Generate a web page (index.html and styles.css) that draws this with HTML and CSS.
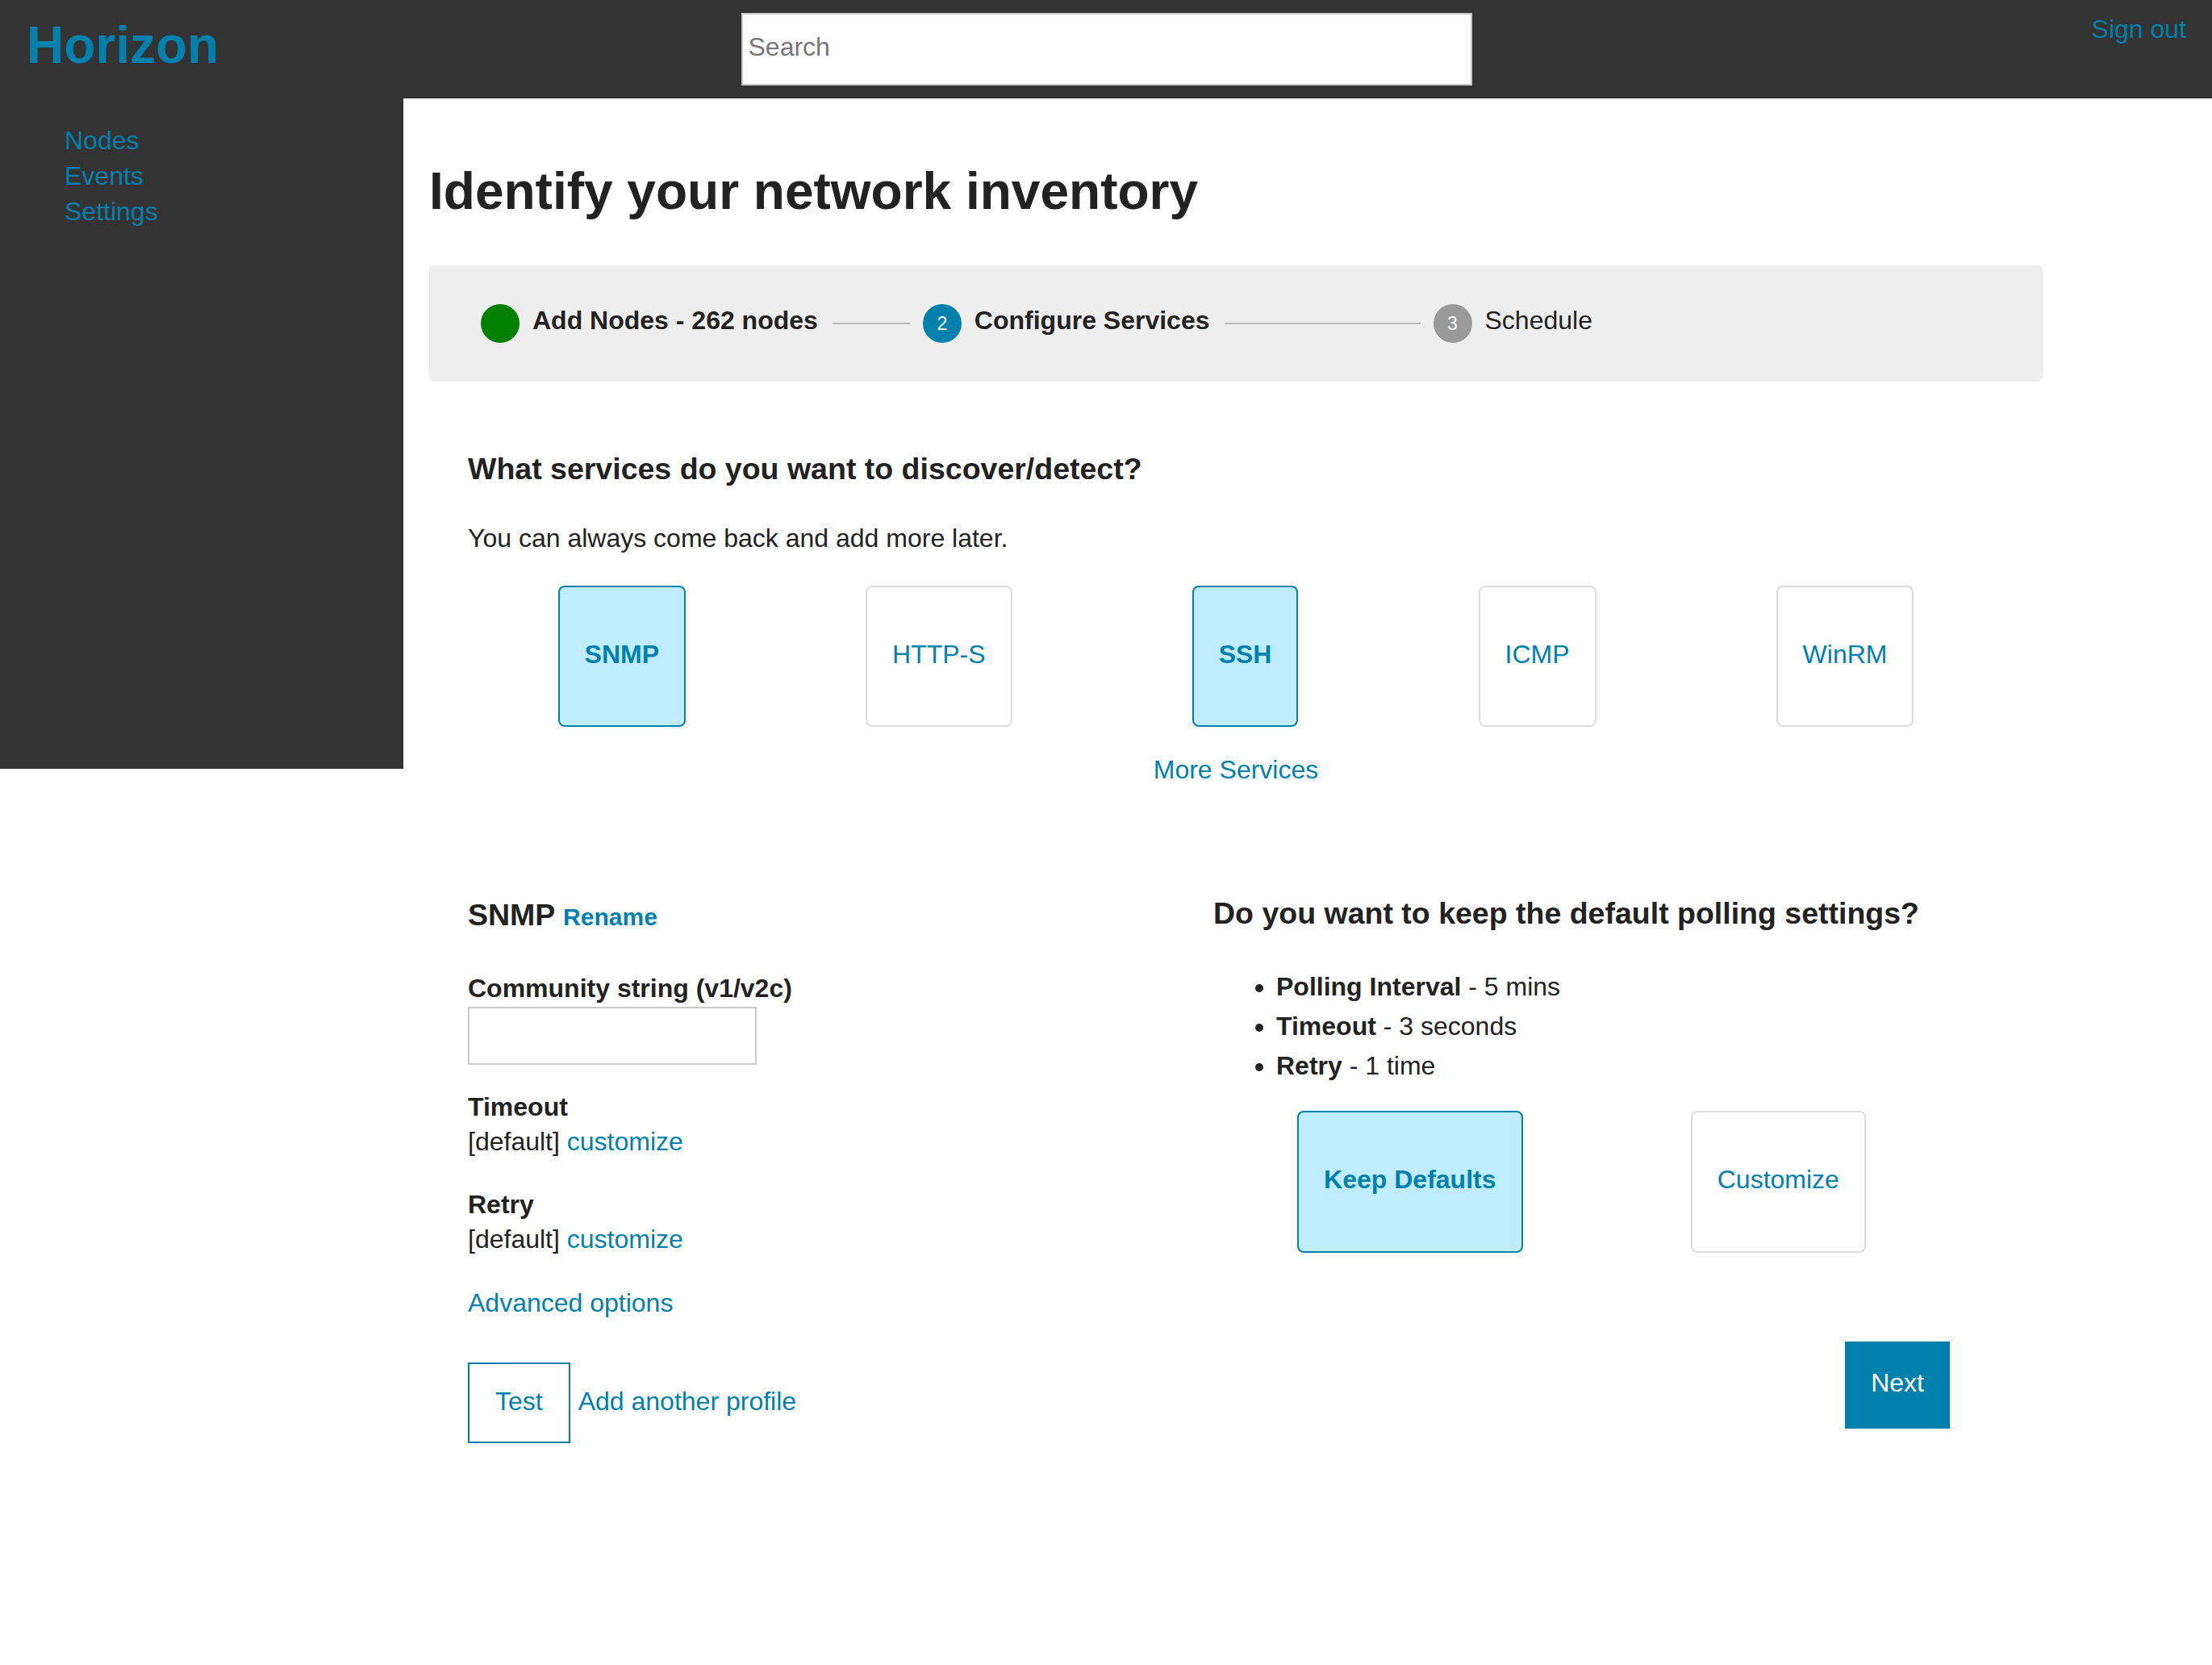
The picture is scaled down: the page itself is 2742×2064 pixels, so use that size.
FILE: index.html
```html
<!DOCTYPE html>
<html lang="en">
<head>
<meta charset="utf-8">
<title>Horizon - Identify your network inventory</title>
<link rel="stylesheet" href="styles.css">
</head>
<body>
<div class="app">
  <header class="topbar">
    <a class="logo" href="#">Horizon</a>
    <input class="search" type="text" placeholder="Search">
    <a class="signout" href="#">Sign out</a>
  </header>
  <div class="body-row">
    <nav class="sidebar">
      <a href="#">Nodes</a>
      <a href="#">Events</a>
      <a href="#">Settings</a>
    </nav>
    <main class="main">
      <h1 class="page-title">Identify your network inventory</h1>

      <div class="stepper">
        <div class="step">
          <span class="step-dot dot-done"></span>
          <span class="step-label strong">Add Nodes - 262 nodes</span>
        </div>
        <span class="step-line line-short"></span>
        <div class="step">
          <span class="step-dot dot-current">2</span>
          <span class="step-label strong">Configure Services</span>
        </div>
        <span class="step-line line-long"></span>
        <div class="step">
          <span class="step-dot dot-todo">3</span>
          <span class="step-label">Schedule</span>
        </div>
      </div>

      <section class="services">
        <h2 class="section-title">What services do you want to discover/detect?</h2>
        <p class="hint">You can always come back and add more later.</p>
        <div class="tiles">
          <button class="tile selected">SNMP</button>
          <button class="tile">HTTP-S</button>
          <button class="tile selected">SSH</button>
          <button class="tile">ICMP</button>
          <button class="tile">WinRM</button>
        </div>
        <div class="more"><a href="#">More Services</a></div>
      </section>

      <section class="config">
        <div class="profile">
          <h2 class="profile-title">SNMP <a class="rename" href="#">Rename</a></h2>
          <div class="field-label">Community string (v1/v2c)</div>
          <input class="text-input" type="text">
          <div class="setting-label">Timeout</div>
          <div class="setting-value">[default] <a href="#">customize</a></div>
          <div class="setting-label retry">Retry</div>
          <div class="setting-value">[default] <a href="#">customize</a></div>
          <div class="advanced"><a href="#">Advanced options</a></div>
          <div class="actions">
            <button class="btn-outline">Test</button>
            <a href="#">Add another profile</a>
          </div>
        </div>

        <div class="polling">
          <h2 class="polling-title">Do you want to keep the default polling settings?</h2>
          <ul class="polling-list">
            <li><b>Polling Interval</b> - 5 mins</li>
            <li><b>Timeout</b> - 3 seconds</li>
            <li><b>Retry</b> - 1 time</li>
          </ul>
          <div class="choices">
            <button class="tile choice selected">Keep Defaults</button>
            <button class="tile choice">Customize</button>
          </div>
          <div class="next-row">
            <button class="btn-primary">Next</button>
          </div>
        </div>
      </section>
    </main>
  </div>
</div>
</body>
</html>
```

FILE: styles.css
```css
* {
  box-sizing: border-box;
}

html,
body {
  margin: 0;
  padding: 0;
}

body {
  font-family: "Liberation Sans", Arial, Helvetica, sans-serif;
  font-size: 32px;
  line-height: 40px;
  color: #222;
  background: #fff;
}

a {
  color: #0081ad;
  text-decoration: none;
}

/* Header */
.topbar {
  display: grid;
  grid-template-columns: 1fr 906px 1fr;
  align-items: start;
  height: 122px;
  padding: 0 32px 0 33px;
  background: #333;
}

.logo {
  justify-self: start;
  margin-top: 19px;
  font-size: 64px;
  line-height: 74px;
  font-weight: 700;
}

.search {
  margin-top: 16px;
  width: 906px;
  height: 90px;
  padding: 0 7px 6px;
  border: 2px solid #c8c8c8;
  background: #fff;
  color: #222;
  font-family: inherit;
  font-size: 32px;
  outline: none;
}

.search::placeholder {
  color: #767676;
}

.signout {
  justify-self: end;
  margin-top: 16px;
}

/* Body */
.body-row {
  display: flex;
  align-items: flex-start;
}

.sidebar {
  flex: none;
  width: 500px;
  height: 831px;
  padding: 30px 0 0 80px;
  background: #333;
  display: flex;
  flex-direction: column;
  align-items: flex-start;
}

.sidebar a {
  line-height: 44px;
}

.main {
  flex: 1;
  padding: 78px 0 0 32px;
}

.page-title {
  margin: 0;
  font-size: 64px;
  line-height: 74px;
  font-weight: 700;
}

/* Stepper */
.stepper {
  margin-top: 55px;
  width: 2000px;
  height: 144px;
  padding-left: 64px;
  background: #eee;
  border-radius: 6px;
  display: flex;
  align-items: center;
}

.step {
  display: flex;
  align-items: center;
  gap: 16px;
}

.step-dot {
  width: 48px;
  height: 48px;
  border-radius: 50%;
  display: flex;
  align-items: center;
  justify-content: center;
  color: #fff;
  font-size: 23px;
  line-height: 1;
}

.dot-done {
  background: #008000;
}

.dot-current {
  background: #0081ad;
}

.dot-todo {
  background: #999;
}

.step-label {
  margin-bottom: 8px;
}

.strong {
  font-weight: 700;
}

.step-line {
  height: 2px;
  margin: 0 16px 0 18px;
  background: #bbb;
}

.line-short {
  width: 96px;
}

.line-long {
  width: 243px;
}

/* Services */
.services {
  width: 2000px;
  padding: 0 48px;
}

.section-title {
  margin: 86px 0 0;
  font-size: 37.5px;
  line-height: 44px;
  font-weight: 700;
}

.hint {
  margin: 44px 0 0;
}

.tiles {
  margin-top: 39px;
  display: flex;
  justify-content: space-around;
}

.tile {
  height: 175px;
  padding: 0 31px 6px;
  border: 2px solid #ddd;
  border-radius: 8px;
  background: #fff;
  color: #0081ad;
  font-family: inherit;
  font-size: 32px;
  line-height: 40px;
  font-weight: 400;
  display: flex;
  align-items: center;
  cursor: pointer;
}

.tile.selected {
  background: #bfedff;
  border-color: #0081ad;
  font-weight: 700;
}

.more {
  margin-top: 33px;
  text-align: center;
}

/* Config */
.config {
  margin-top: 136px;
  padding: 0 48px;
  display: grid;
  grid-template-columns: 924px 913px;
}

.profile {
  display: flex;
  flex-direction: column;
  align-items: flex-start;
}

.profile-title {
  margin: 2px 0 0;
  font-size: 37.5px;
  line-height: 44px;
  font-weight: 700;
}

.rename {
  font-size: 30px;
}

.field-label {
  margin-top: 46px;
  font-weight: 700;
}

.text-input {
  margin-top: 3px;
  width: 358px;
  height: 72px;
  border: 2px solid #ccc;
  font-family: inherit;
  font-size: 32px;
  outline: none;
}

.setting-label {
  margin-top: 32px;
  font-weight: 700;
}

.setting-label.retry {
  margin-top: 38px;
}

.setting-value {
  margin-top: 3px;
}

.advanced {
  margin-top: 39px;
}

.actions {
  margin-top: 54px;
  display: flex;
  align-items: baseline;
  gap: 10px;
}

.btn-outline {
  padding: 28px 32px 32px;
  border: 2px solid #0081ad;
  background: #fff;
  color: #0081ad;
  font-family: inherit;
  font-size: 32px;
  line-height: 36px;
  cursor: pointer;
}

.polling-title {
  margin: 0;
  font-size: 37.5px;
  line-height: 44px;
  font-weight: 700;
}

.polling-list {
  margin: 45px 0 0;
  padding-left: 78px;
  line-height: 49px;
}

.choices {
  margin-top: 31px;
  display: flex;
  justify-content: space-around;
}

.tile.choice {
  height: 176px;
}

.next-row {
  margin-top: 110px;
  display: flex;
  justify-content: flex-end;
}

.btn-primary {
  padding: 33px 32px 39px;
  border: none;
  background: #0081ad;
  color: #fff;
  font-family: inherit;
  font-size: 32px;
  line-height: 36px;
  cursor: pointer;
}
```
